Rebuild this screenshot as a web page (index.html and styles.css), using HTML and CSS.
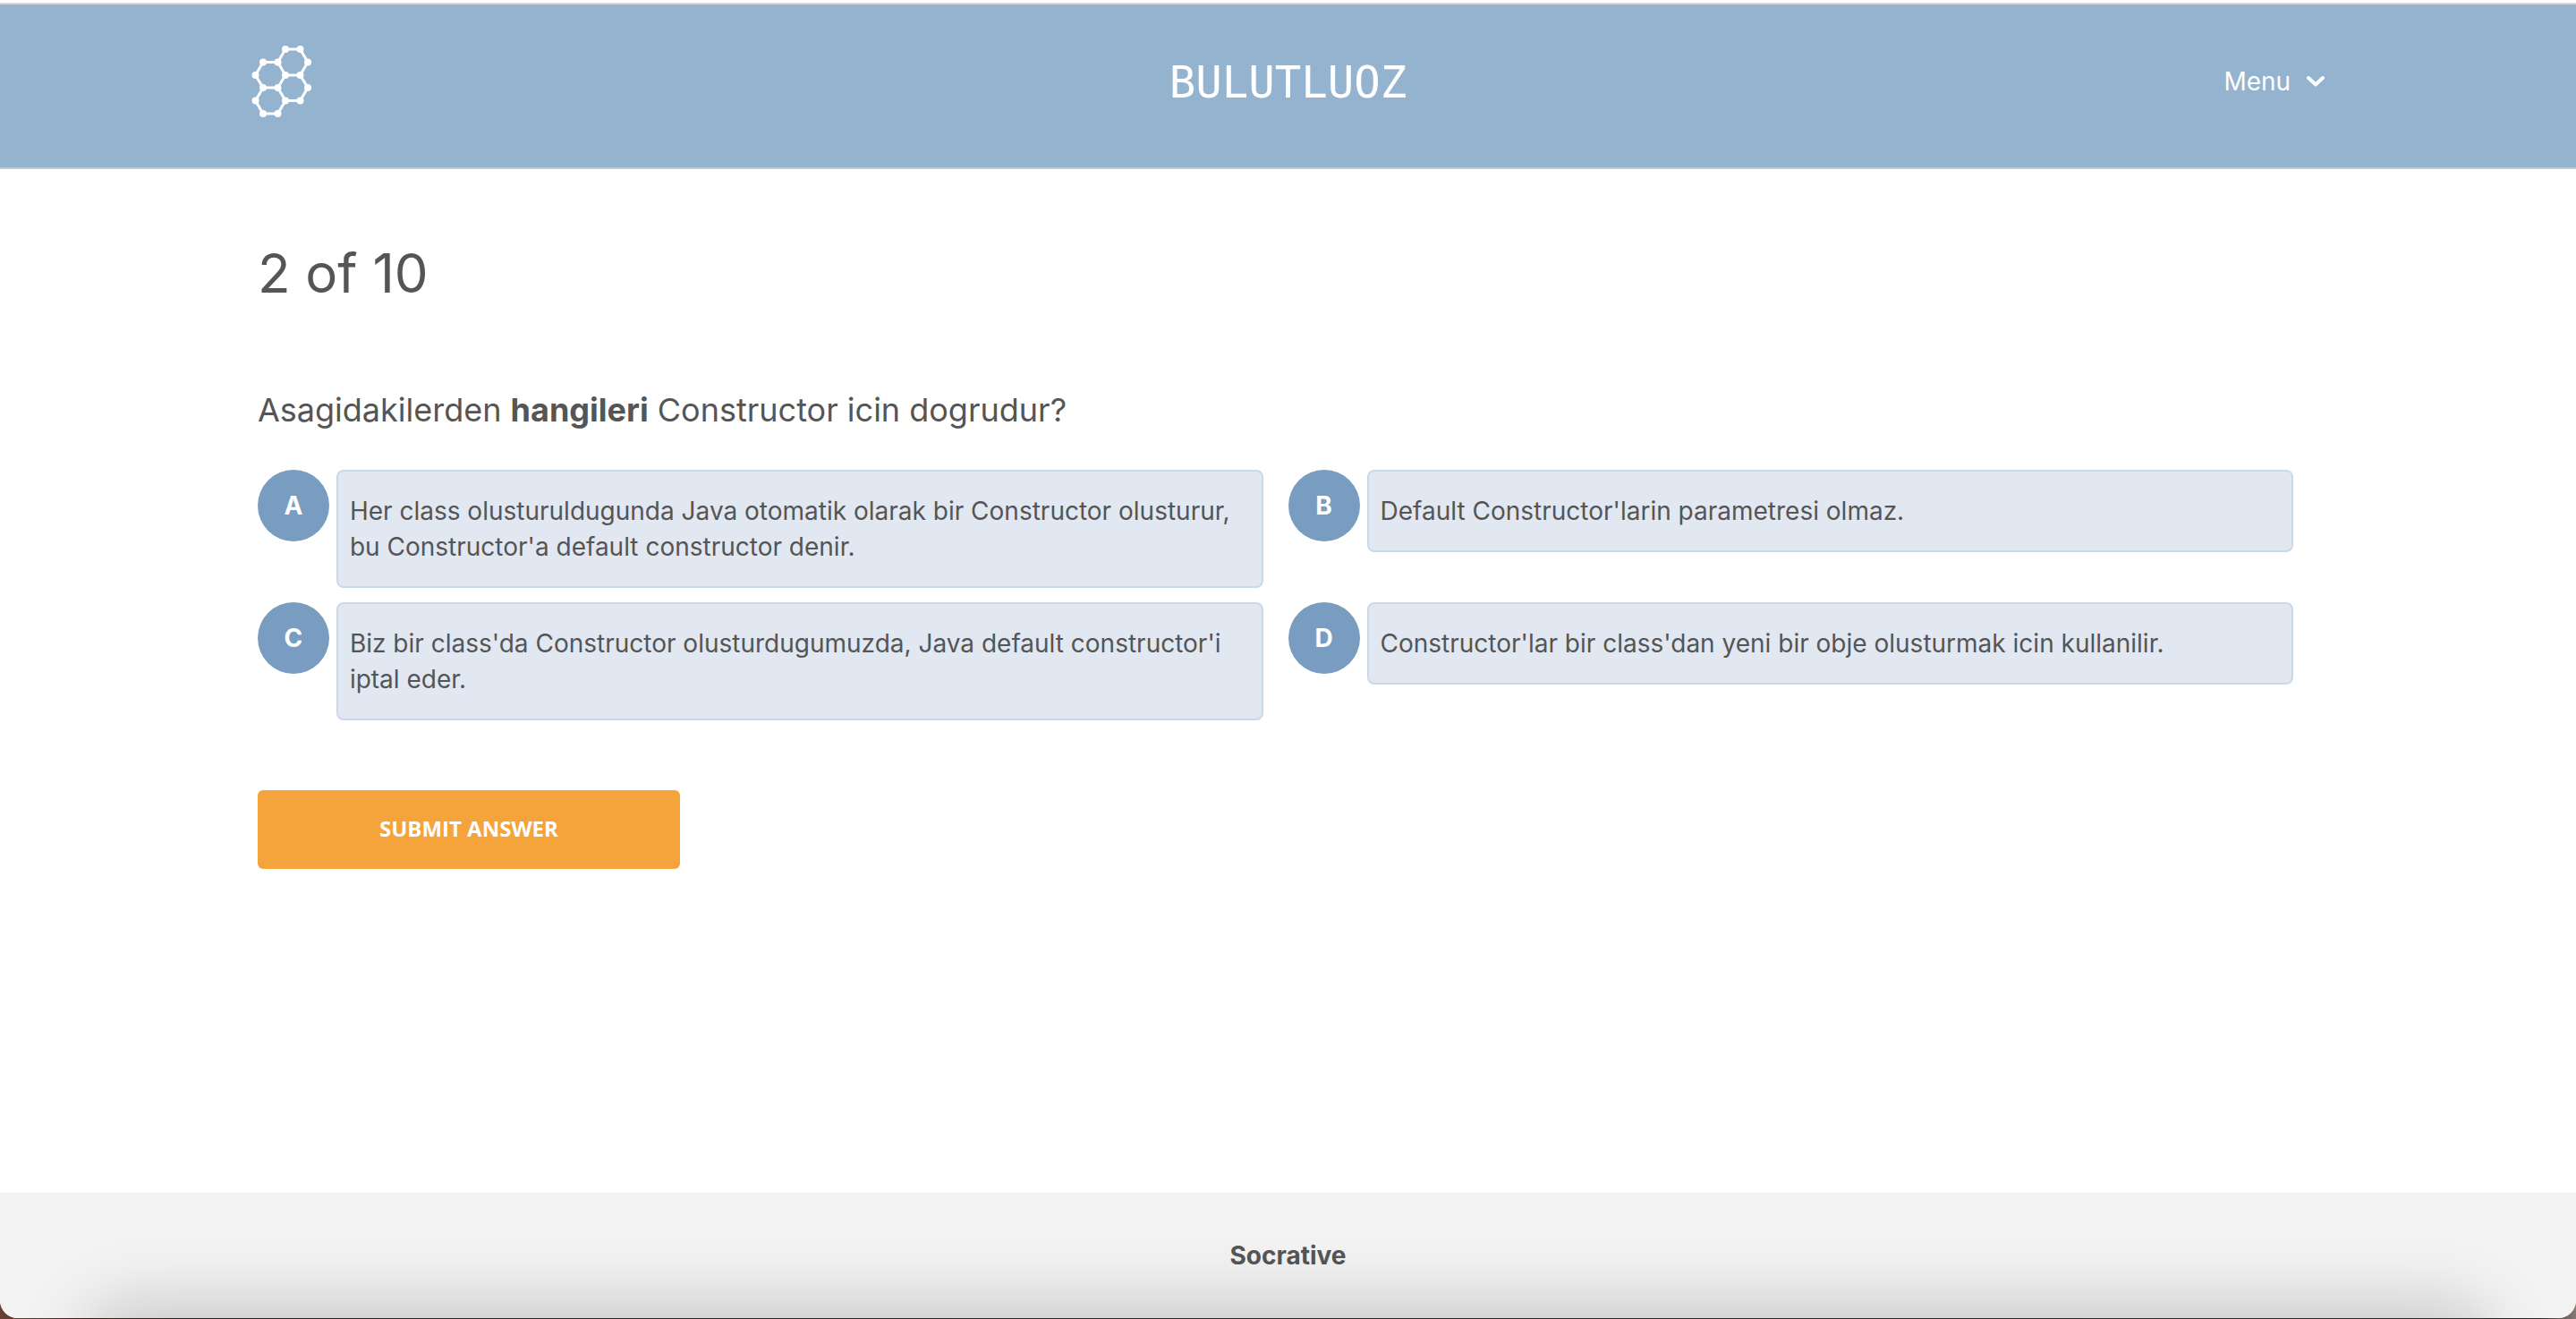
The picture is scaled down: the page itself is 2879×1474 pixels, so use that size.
FILE: index.html
```html
<!DOCTYPE html>
<html lang="tr">
<head>
<meta charset="utf-8">
<meta name="viewport" content="width=device-width, initial-scale=1">
<title>Socrative</title>
<link rel="stylesheet" href="styles.css">
</head>
<body>
<div class="page">
  <header class="header">
    <svg class="logo" viewBox="21 20 68 82" role="img" aria-label="Socrative">
      <g fill="none" stroke="#fff" stroke-width="3">
        <path d="M59 25H75.500L84 39.500L75.500 54H59L50.500 39.500Z"/>
        <path d="M50.500 39.500H34L25.500 54L34 68H50.500L59 54"/>
        <path d="M75.500 54L84 68L75.500 82.500H59L50.500 68"/>
        <path d="M34 68L25.500 82.500L34 97H50.500L59 82.500"/>
      </g>
      <g fill="#fff">
        <circle cx="59" cy="25" r="4"/><circle cx="75.500" cy="25" r="4"/>
        <circle cx="84" cy="39.500" r="4"/><circle cx="75.500" cy="54" r="4"/>
        <circle cx="59" cy="54" r="4"/><circle cx="50.500" cy="39.500" r="4"/>
        <circle cx="34" cy="39.500" r="4"/><circle cx="25.500" cy="54" r="4"/>
        <circle cx="34" cy="68" r="4"/><circle cx="50.500" cy="68" r="4"/>
        <circle cx="84" cy="68" r="4"/><circle cx="75.500" cy="82.500" r="4"/>
        <circle cx="59" cy="82.500" r="4"/><circle cx="25.500" cy="82.500" r="4"/>
        <circle cx="34" cy="97" r="4"/><circle cx="50.500" cy="97" r="4"/>
      </g>
    </svg>
    <div class="room">BULUTLUOZ</div>
    <button class="menu" type="button">Menu
      <svg class="chevron" viewBox="0 0 20 12" aria-hidden="true"><path d="M2 2L10 9.500L18 2" fill="none" stroke="#fff" stroke-width="4" stroke-linecap="round" stroke-linejoin="round"/></svg>
    </button>
  </header>

  <main class="main">
    <h1 class="progress">2 of 10</h1>
    <p class="question">Asagidakilerden <strong>hangileri</strong> Constructor icin dogrudur?</p>
    <form>
      <div class="choices">
        <div class="choice">
          <button class="letter" type="button" aria-describedby="a">A</button>
          <p class="answer" id="a">Her class olusturuldugunda Java otomatik olarak bir Constructor olusturur, bu Constructor'a default constructor denir.</p>
        </div>
        <div class="choice">
          <button class="letter" type="button" aria-describedby="b">B</button>
          <p class="answer" id="b">Default Constructor'larin parametresi olmaz.</p>
        </div>
        <div class="choice">
          <button class="letter" type="button" aria-describedby="c">C</button>
          <p class="answer" id="c">Biz bir class'da Constructor olusturdugumuzda, Java default constructor'i iptal eder.</p>
        </div>
        <div class="choice">
          <button class="letter" type="button" aria-describedby="d">D</button>
          <p class="answer" id="d">Constructor'lar bir class'dan yeni bir obje olusturmak icin kullanilir.</p>
        </div>
      </div>
      <button class="submit" type="submit">SUBMIT ANSWER</button>
    </form>
  </main>

  <footer class="footer">Socrative</footer>
</div>
</body>
</html>
```
FILE: styles.css
```css
* { box-sizing: border-box; }

body {
  margin: 0;
  padding-bottom: 1px;
  background: linear-gradient(90deg, #6b4035 0, #3a201c 100px, #222 200px, #2a2a2a calc(100% - 40px), #857a76 100%);
  color: #555;
  font: 28px/40px Inter, "Liberation Sans", sans-serif;
}

h1, p { margin: 0; }

button {
  border: 0;
  padding: 0;
  color: #fff;
  font: inherit;
  cursor: pointer;
}

.page {
  display: flex;
  flex-direction: column;
  min-height: calc(100vh - 1px);
  padding-top: 3px;
  border-radius: 0 0 20px 20px;
  overflow: hidden;
  background: #fff;
}

.header {
  display: grid;
  grid-template-columns: 1fr auto 1fr;
  align-items: center;
  padding: 45px calc(10% - 7px) 55px;
  border-top: 2px solid #d9d9d9;
  border-bottom: 2px solid #c9c9c9;
  background: #93b3cf;
  color: #fff;
}

.logo { width: 68px; height: 82px; }

.room {
  padding-top: 4px;
  font: 49px/60px "DejaVu Sans Mono", monospace;
}

.menu {
  display: flex;
  align-items: center;
  justify-self: end;
  gap: 18px;
  background: none;
}

.chevron { width: 20px; height: 12px; }

.main { padding: 80px 10%; }

.progress {
  font-size: 60px;
  font-weight: 400;
  line-height: 72px;
}

.question {
  margin: 93px 0 43px;
  font-size: 36px;
  line-height: 48px;
}

.choices {
  display: grid;
  grid-template-columns: 1fr 1fr;
  row-gap: 16px;
}

.choice {
  display: flex;
  align-items: flex-start;
  gap: 8px;
  padding-right: 28px;
}

.letter {
  flex: none;
  width: 80px;
  height: 80px;
  border-radius: 50%;
  background: #789dc1;
  font-weight: 700;
}

.answer {
  flex: 1;
  padding: 24px 13px;
  border: 2px solid #c9d9e8;
  border-radius: 8px;
  background: #e1e8f2;
}

.submit {
  width: 472px;
  height: 88px;
  margin-top: 78px;
  padding-bottom: 2px;
  border-radius: 6px;
  background: #f5a33b;
  font: 700 24px/32px "Open Sans", sans-serif;
}

.footer {
  position: relative;
  margin-top: auto;
  padding: 50px 0;
  overflow: hidden;
  background: #f3f3f3;
  font-weight: 700;
  text-align: center;
}

/* soft shade rising from the bottom edge */
.footer::after {
  content: "";
  position: absolute;
  top: 100%;
  left: 90px;
  right: 90px;
  height: 200px;
  border-radius: 60px;
  box-shadow: 0 -20px 72px rgba(0, 0, 0, .17);
}
```
